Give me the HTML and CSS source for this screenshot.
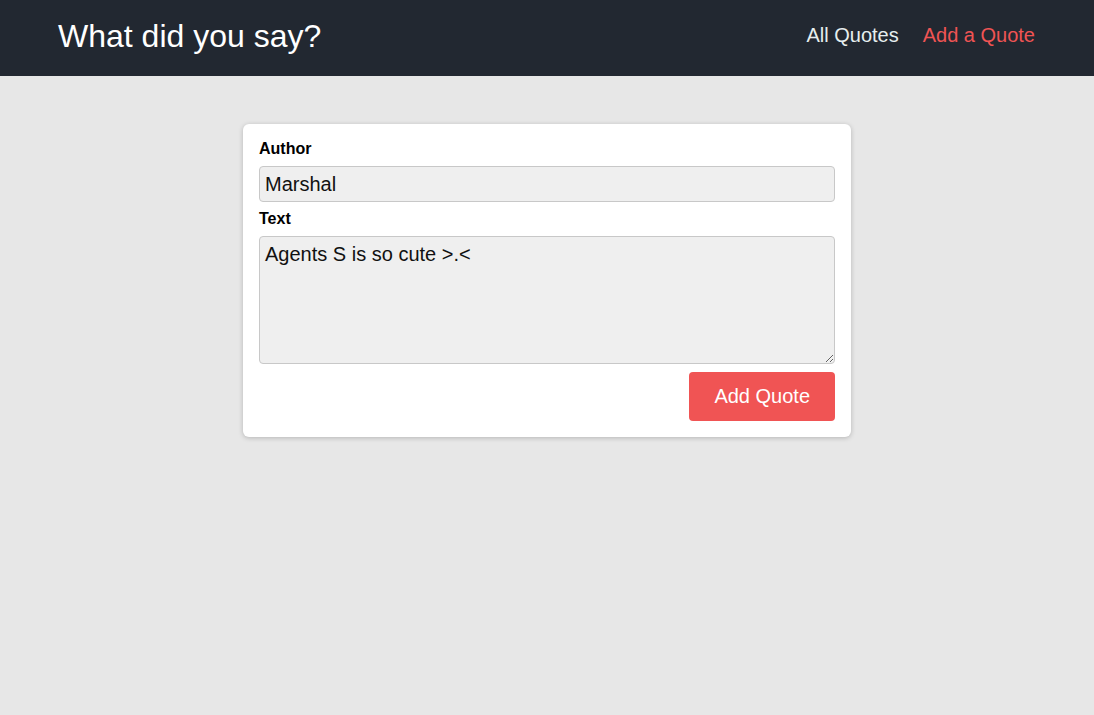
FILE: index.html
```html
<!DOCTYPE html>
<html lang="en">
<head>
<meta charset="utf-8">
<title>What did you say?</title>
<link rel="stylesheet" href="styles.css">
</head>
<body>
<header class="header">
  <div class="logo">What did you say?</div>
  <nav class="nav">
    <a class="nav-link" href="#">All Quotes</a>
    <a class="nav-link active" href="#">Add a Quote</a>
  </nav>
</header>
<main class="main">
  <form class="card">
    <div class="control">
      <label class="label" for="author">Author</label>
      <input class="input" id="author" type="text" value="Marshal">
    </div>
    <div class="control">
      <label class="label" for="text">Text</label>
      <textarea class="textarea" id="text" rows="5">Agents S is so cute &gt;.&lt;</textarea>
    </div>
    <div class="actions">
      <button class="btn" type="button">Add Quote</button>
    </div>
  </form>
</main>
</body>
</html>
```
FILE: styles.css
```css
* { box-sizing: border-box; }
html, body { margin: 0; padding: 0; }
body {
  background: #e7e7e7;
  font-family: "Liberation Sans", Arial, sans-serif;
  min-height: 100vh;
}
.header {
  height: 76px;
  background: #222831;
  display: flex;
  align-items: center;
  justify-content: space-between;
  padding: 0 59px 4px 58px;
}
.logo {
  color: #ffffff;
  font-size: 32px;
  line-height: 1;
}
.nav {
  display: flex;
  gap: 24px;
  padding-bottom: 2px;
}
.nav-link {
  color: #e6eeee;
  text-decoration: none;
  font-size: 20px;
}
.nav-link.active { color: #f05454; }
.main {
  padding-top: 48px;
  display: flex;
  justify-content: center;
}
.card {
  width: 608px;
  background: #ffffff;
  border-radius: 6px;
  box-shadow: 0 1px 5px rgba(0,0,0,0.22);
  padding: 16px;
}
.control { margin-bottom: 8px; }
.label {
  display: block;
  font-weight: bold;
  font-size: 16px;
  line-height: 18px;
  color: #000;
  margin-bottom: 8px;
}
.input, .textarea {
  display: block;
  width: 100%;
  font: inherit;
  font-size: 20px;
  color: #111;
  background: #efefef;
  border: 1px solid #c8c8c8;
  border-radius: 4px;
  padding: 5px;
}
.input { height: 36px; }
.textarea { height: 128px; resize: vertical; line-height: 23px; padding-top: 6px; }
.actions {
  display: flex;
  justify-content: flex-end;
}
.btn {
  font: inherit;
  font-size: 20px;
  line-height: 23px;
  color: #ffffff;
  background: #f05454;
  border: none;
  border-radius: 4px;
  padding: 13px 25px;
  cursor: pointer;
}
```
